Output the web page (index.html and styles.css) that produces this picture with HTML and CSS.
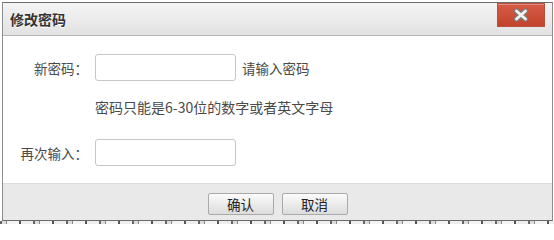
FILE: index.html
```html
<!DOCTYPE html>
<html lang="zh">
<head>
<meta charset="utf-8">
<title>修改密码</title>
<link rel="stylesheet" href="styles.css">
</head>
<body>
<div class="page">
  <div class="dialog">
    <div class="titlebar">
      <span class="title">修改密码</span>
      <button class="close" type="button" aria-label="关闭">
        <svg width="18" height="14" viewBox="0 0 18 14">
          <path d="M4.5 3 L13.5 11 M13.5 3 L4.5 11" stroke="#7d7d7d" stroke-width="5.2" stroke-linecap="round" fill="none"/>
          <path d="M4.5 3 L13.5 11 M13.5 3 L4.5 11" stroke="#f4f4f4" stroke-width="2.8" stroke-linecap="round" fill="none"/>
        </svg>
      </button>
    </div>
    <div class="content">
      <div class="row">
        <label class="label">新密码：</label>
        <input class="field" type="password">
        <span class="hint">请输入密码</span>
      </div>
      <div class="row note-row">
        <span class="label"></span>
        <span class="note">密码只能是6-30位的数字或者英文字母</span>
      </div>
      <div class="row">
        <label class="label">再次输入：</label>
        <input class="field" type="password">
      </div>
    </div>
    <div class="footer">
      <button class="btn" type="button">确认</button>
      <button class="btn" type="button">取消</button>
    </div>
  </div>
  <div class="under"></div>
</div>
</body>
</html>
```
FILE: styles.css
```css
html, body {
  margin: 0;
  padding: 0;
  background: #ffffff;
}
body {
  font-family: "Noto Sans CJK SC", "Noto Sans", sans-serif;
  color: #444;
  width: 554px;
  height: 226px;
  overflow: hidden;
}
.page {
  padding: 2px 0 0 2px;
}
.dialog {
  width: 551px;
  box-sizing: border-box;
  border: 1px solid #8c8c8c;
  border-top-color: #6e6e6e;
  border-bottom-color: #6a6a6a;
  display: flex;
  flex-direction: column;
  background: #fff;
}
.titlebar {
  height: 32px;
  border-bottom: 1px solid #b4b4b4;
  background: linear-gradient(#f4f4f4, #e2e2e2);
  display: flex;
  justify-content: space-between;
  align-items: center;
  padding-left: 7px;
  padding-right: 7px;
}
.title {
  font-size: 14px;
  font-weight: bold;
  color: #333;
  text-shadow: 0 1px 0 #fff;
}
.close {
  align-self: flex-start;
  width: 48px;
  height: 24px;
  padding: 0;
  border: 1px solid #b9503b;
  box-shadow: inset 0 1px 0 rgba(255,255,255,0.3);
  background: linear-gradient(#d65c45, #c3432c);
  display: flex;
  align-items: center;
  justify-content: center;
}
.close svg {
  display: block;
  margin-top: -1px;
}
.content {
  height: 147px;
  padding-top: 18px;
  box-sizing: border-box;
  display: flex;
  flex-direction: column;
}
.row {
  display: flex;
  align-items: center;
}
.label {
  width: 85px;
  text-align: right;
  color: #4a4a4a;
  font-size: 13.5px;
}
.field {
  margin: 0 0 0 7px;
  width: 141px;
  height: 27px;
  box-sizing: border-box;
  border: 1px solid #c6c6c6;
  border-radius: 3px;
  background: #fff;
  padding: 0 4px;
}
.hint {
  margin-left: 6px;
  color: #4a4a4a;
  font-size: 13.5px;
}
.note-row {
  height: 20px;
  margin-top: 16px;
  margin-bottom: 22px;
}
.note {
  margin-left: 7px;
  color: #4a4a4a;
  font-size: 14px;
  white-space: nowrap;
}
.footer {
  border-top: 1px solid #dcdcdc;
  background: #e9e9e9;
  height: 37px;
  box-sizing: border-box;
  padding-top: 9px;
  display: flex;
  justify-content: center;
  align-items: flex-start;
  gap: 8px;
}
.btn {
  width: 66px;
  height: 22px;
  padding: 0;
  border: 1px solid #a9a9a9;
  border-radius: 2px;
  background: linear-gradient(#fbfbfb, #dcdcdc);
  font-family: "Noto Sans CJK SC", "Noto Sans", sans-serif;
  font-size: 13.5px;
  color: #222;
  line-height: 20px;
}
.under {
  height: 6px;
  margin-left: -2px;
  background:
    linear-gradient(#fff 0 0) bottom / 100% 3px no-repeat,
    repeating-linear-gradient(90deg, #666 0 2px, #ddd 2px 6px, #888 6px 7px, #f4f4f4 7px 19px, #555 19px 21px, #eee 21px 33px);
}
```
